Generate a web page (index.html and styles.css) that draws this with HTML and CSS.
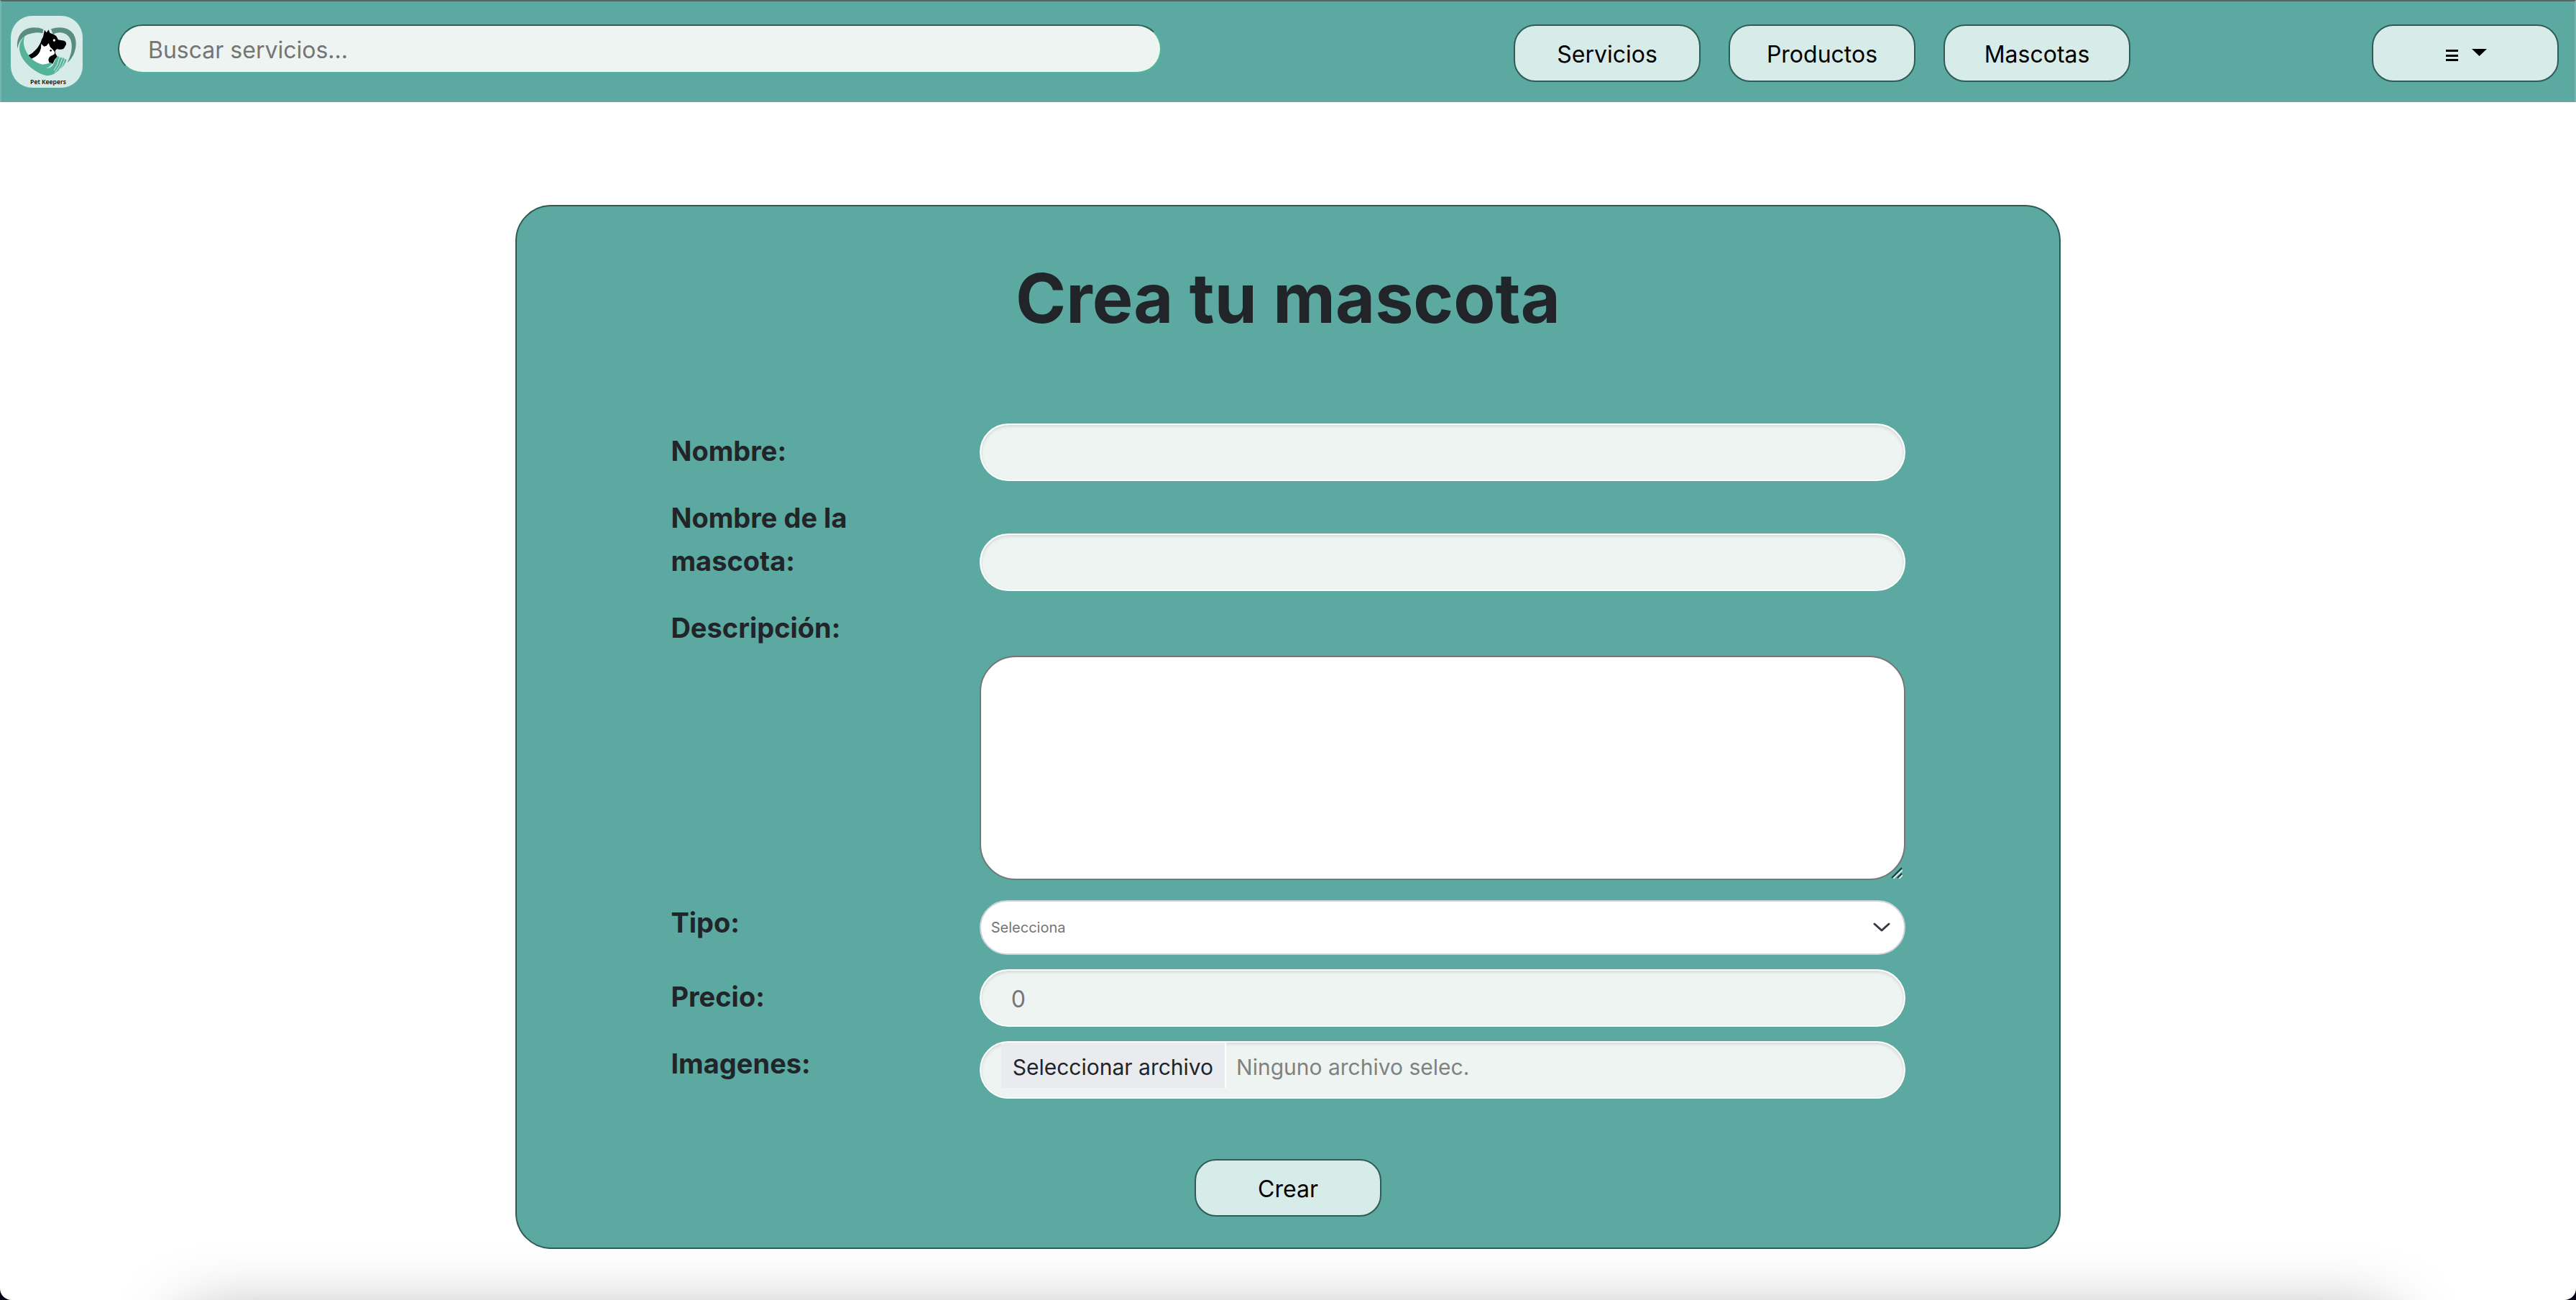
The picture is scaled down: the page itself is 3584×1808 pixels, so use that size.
FILE: index.html
```html
<!DOCTYPE html>
<html lang="es">
<head>
<meta charset="utf-8">
<meta name="viewport" content="width=device-width, initial-scale=1">
<title>Crea tu mascota</title>
<link rel="stylesheet" href="styles.css">
</head>
<body>
<header class="topbar">
  <a class="logo" href="#" aria-label="Pet Keepers">
    <svg class="logo-art" viewBox="45 66 300 300" aria-hidden="true">
      <path fill="#5b8c80" d="M73 203C66 150 96 115 142 115Q165 115 181 122L178 139Q156 133 138 138C102 143 79 165 73 203Z"/>
      <path fill="#5b8c80" d="M213 121Q240 111 270 117C305 126 319 155 317 188C314 222 300 245 281 262C292 237 301 216 299 186C297 151 272 135 248 136Q231 137 221 143Z"/>
      <path fill="#000" d="M118 231C143 219 163 194 170 176Q174 163 180 153L186 125L194 136L203 124L208 137Q225 142 235 151L243 166L268 170Q278 176 276 185L267 202Q256 210 239 204Q227 208 232 224L239 236L228 249L220 266L206 262L190 226L141 245L130 246Z"/>
      <path fill="#fff" d="M172 183L184 194L194 191L203 180L209 196Q216 202 228 216Q231 226 220 230Q208 233 204 243Q199 253 206 262L190 273L163 267L131 245Q157 235 166 216Q173 202 172 183Z"/>
      <circle cx="226" cy="168" r="5" fill="#fff"/>
      <circle cx="212" cy="211" r="4" fill="#000"/>
      <path fill="#54b399" d="M104 149C92 178 101 209 127 240Q150 264 177 269Q195 267 213 261Q219 267 211 274Q202 284 191 285Q211 286 222 270Q232 244 242 235Q249 234 247 245Q256 235 260 243Q270 239 268 248Q279 244 277 253C268 276 252 289 233 303C218 315 199 319 180 312C141 298 92 258 83 216C77 192 85 168 104 149Z"/>
      <path fill="none" stroke="#d7ece9" stroke-width="3" d="M247 243Q244 268 225 294M260 244Q253 275 229 303M269 250Q263 276 246 292"/>
      <text class="logo-name" x="201" y="350" text-anchor="middle">Pet Keepers</text>
    </svg>
  </a>
  <input class="search" type="search" placeholder="Buscar servicios..." aria-label="Buscar servicios">
  <nav class="nav">
    <button class="btn" type="button">Servicios</button>
    <button class="btn" type="button">Productos</button>
    <button class="btn" type="button">Mascotas</button>
  </nav>
  <button class="btn menu" type="button" aria-label="Menú">
    <svg class="menu-icon" width="60" height="18" viewBox="0 0 60 18" aria-hidden="true">
      <path d="M3 1h17v3H3zM3 8h17v3H3zM3 14h17v3H3zM39 0h21L49.500 10z"/>
    </svg>
  </button>
</header>

<main>
  <form class="card">
    <h1 class="title">Crea tu mascota</h1>
    <div class="fields">
      <label class="label label-single" for="nombre">Nombre:</label>
      <input class="control" id="nombre" type="text">

      <label class="label" for="mascota">Nombre de la mascota:</label>
      <input class="control" id="mascota" type="text">

      <label class="label" for="descripcion">Descripción:</label>
      <div class="area-wrap">
        <textarea class="area" id="descripcion"></textarea>
        <svg class="grip" width="16" height="16" viewBox="0 0 16 16" aria-hidden="true">
          <path stroke="#d7ece9" d="M3 16L16 4M11 16L16 11"/>
          <path stroke="#1d3a37" d="M1 15L15 1M9 15L15 9"/>
        </svg>
      </div>

      <label class="label" for="tipo">Tipo:</label>
      <div class="select-wrap">
        <select class="select" id="tipo"><option>Selecciona</option></select>
        <svg class="chevron" width="24" height="14" viewBox="0 0 24 14" aria-hidden="true"><path d="M2 2l10 9 10-9"/></svg>
      </div>

      <label class="label label-single" for="precio">Precio:</label>
      <input class="control" id="precio" type="text" inputmode="numeric" placeholder="0">

      <label class="label" for="imagenes">Imagenes:</label>
      <div class="control file">
        <span class="file-button">Seleccionar archivo</span>
        <span class="file-name">Ninguno archivo selec.</span>
        <input class="file-input" id="imagenes" type="file">
      </div>
    </div>
    <button class="btn submit" type="submit">Crear</button>
  </form>
</main>
<div class="shade" aria-hidden="true"></div>
<div class="frame" aria-hidden="true"></div>
</body>
</html>
```
FILE: styles.css
```css
* { box-sizing: border-box; }

html { overflow: hidden; }

body {
  margin: 0;
  background: #fff;
  color: #212529;
  font-family: Inter, "Liberation Sans", sans-serif;
  font-size: 32px;
}

button, input, textarea, select { font: inherit; margin: 0; }

.topbar {
  display: flex;
  align-items: flex-start;
  padding: 32px 22px 20px 13px;
  min-height: 142px;
  background: #5ba9a0;
  border: 2px solid #74b6af;
  border-top-color: #5f6163;
  border-bottom: 0;
}

.logo {
  flex: none;
  width: 100px;
  height: 100px;
  margin: -12px 49px 0 0;
  border-radius: 30px;
  background: #d7ece9;
}

.logo-art { display: block; width: 100%; height: 100%; }

.logo-name {
  font-family: "Open Sans", sans-serif;
  font-size: 26px;
  font-weight: 600;
  fill: #000;
}

.search {
  appearance: none;
  flex: 0 1 1452px;
  min-width: 0;
  height: 68px;
  padding: 2px 40px 0;
  border: 2px solid;
  border-color: #2b6455 #53b497 #53b497 #2b6455;
  border-radius: 34px;
  background: #eef4f2;
  outline: 0;
}

.search::placeholder, .control::placeholder { color: #757575; opacity: 1; }

.nav {
  display: flex;
  gap: 39px;
  margin-left: auto;
  margin-right: 336px;
}

.btn {
  flex: none;
  width: 260px;
  height: 80px;
  padding: 2px 0 0;
  border: 2px solid #2f5c57;
  border-radius: 30px;
  background: #d7ece9;
  color: #000;
}

.menu { padding-top: 6px; }

.menu-icon { display: block; margin: 0 auto; }

.card {
  width: 60%;
  margin: 143px auto 0;
  padding: 68px 0 43px;
  border: 2px solid #2f5c57;
  border-radius: 50px;
  background: #5ba9a0;
}

.title {
  margin: 0 0 114px;
  font-size: 95px;
  line-height: 120px;
  font-weight: 700;
  text-align: center;
}

.fields {
  display: grid;
  grid-template-columns: 1fr 3fr;
  row-gap: 20px;
  padding: 0 10%;
}

.label {
  padding: 1px 64px 12px 0;
  font-size: 38px;
  line-height: 60px;
  font-weight: 700;
}

.label-single { padding-top: 8px; }

.control {
  align-self: end;
  width: 100%;
  height: 80px;
  padding: 2px 42px 0;
  border: 2px solid #fff;
  border-radius: 40px;
  background: #eef4f2;
  box-shadow: inset 0 2px 4px rgba(0, 0, 0, .12);
  outline: 0;
}

.area-wrap { position: relative; margin: 70px 0 8px; }

.area {
  display: block;
  width: 100%;
  height: 312px;
  padding: 16px 40px;
  border: 2px solid #767676;
  border-radius: 50px;
  background: #fff;
  resize: none;
  outline: 0;
}

.grip {
  position: absolute;
  right: 4px;
  bottom: 2px;
  fill: none;
  stroke-width: 2;
}

.select-wrap { position: relative; }

.select {
  appearance: none;
  display: block;
  width: 100%;
  height: 76px;
  padding: 0 14px;
  border: 2px solid #ced4da;
  border-radius: 38px;
  background: #fff;
  color: #757575;
  font-size: 20px;
}

.chevron {
  position: absolute;
  right: 21px;
  top: 31px;
  fill: none;
  stroke: #343a40;
  stroke-width: 3;
  stroke-linecap: round;
  stroke-linejoin: round;
  pointer-events: none;
}

.file {
  position: relative;
  display: flex;
  align-items: flex-start;
  padding: 0 28px;
  font-size: 30px;
  line-height: 58px;
  overflow: hidden;
}

.file-button {
  padding: 5px 16px 0;
  border-right: 2px solid #fff;
  background: #eaebef;
}

.file-name { padding: 5px 0 0 14px; color: #808281; }

.file-input {
  position: absolute;
  inset: 0;
  width: 100%;
  opacity: 0;
}

.submit { display: block; margin: 84px auto 0; }

/* soft shadow along the lower window edge */
.shade {
  position: fixed;
  left: 260px;
  right: 260px;
  top: calc(100% + 32px);
  height: 200px;
  box-shadow: 0 0 100px rgba(0, 0, 0, .42);
  pointer-events: none;
}

/* rounded lower window corners */
.frame {
  position: fixed;
  inset: auto 0 0 0;
  height: 40px;
  border-radius: 0 0 16px 16px;
  box-shadow: 0 20px 0 0 #05000f;
  clip-path: inset(0);
  pointer-events: none;
}
```
